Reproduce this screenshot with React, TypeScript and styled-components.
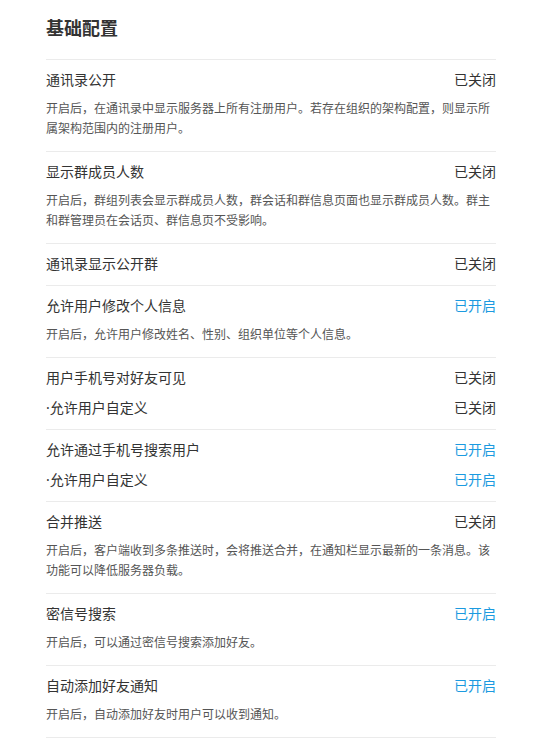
import React, { FC } from 'react';
import styled, { createGlobalStyle } from 'styled-components';

const GlobalStyle = createGlobalStyle`
  html, body {
    margin: 0;
    padding: 0;
    background: #fff;
  }
  body {
    font-family: "Noto Sans", "Noto Sans CJK SC", sans-serif;
    color: #333;
  }
`;

const Page = styled.div`
  width: 450px;
  padding: 0 50px 0 46px;
`;

const Heading = styled.h2`
  margin: 0;
  padding: 15px 0 18px;
  font-size: 18px;
  line-height: 26px;
  font-weight: 700;
  color: #333;
  border-bottom: 1px solid #ebebeb;
`;

const Section = styled.div`
  padding: 9px 0 10px;
  border-bottom: 1px solid #ebebeb;
`;

const Line = styled.div<{ $sub?: boolean }>`
  display: flex;
  align-items: center;
  justify-content: space-between;
  font-size: 14px;
  line-height: 22px;
  margin-top: ${p => (p.$sub ? '8px' : '0')};
`;

const Label = styled.span`
  color: #333;
`;

const Status = styled.span<{ $on: boolean }>`
  color: ${p => (p.$on ? '#1b9ae0' : '#333')};
`;

const Desc = styled.p`
  margin: 8px 0 2px;
  font-size: 12px;
  line-height: 20px;
  color: #555;
`;

type Item = {
  title: string;
  on: boolean;
  desc?: string;
  sub?: { title: string; on: boolean };
};

const items: Item[] = [
  {
    title: '通讯录公开',
    on: false,
    desc: '开启后，在通讯录中显示服务器上所有注册用户。若存在组织的架构配置，则显示所属架构范围内的注册用户。',
  },
  {
    title: '显示群成员人数',
    on: false,
    desc: '开启后，群组列表会显示群成员人数，群会话和群信息页面也显示群成员人数。群主和群管理员在会话页、群信息页不受影响。',
  },
  { title: '通讯录显示公开群', on: false },
  {
    title: '允许用户修改个人信息',
    on: true,
    desc: '开启后，允许用户修改姓名、性别、组织单位等个人信息。',
  },
  {
    title: '用户手机号对好友可见',
    on: false,
    sub: { title: '·允许用户自定义', on: false },
  },
  {
    title: '允许通过手机号搜索用户',
    on: true,
    sub: { title: '·允许用户自定义', on: true },
  },
  {
    title: '合并推送',
    on: false,
    desc: '开启后，客户端收到多条推送时，会将推送合并，在通知栏显示最新的一条消息。该功能可以降低服务器负载。',
  },
  {
    title: '密信号搜索',
    on: true,
    desc: '开启后，可以通过密信号搜索添加好友。',
  },
  {
    title: '自动添加好友通知',
    on: true,
    desc: '开启后，自动添加好友时用户可以收到通知。',
  },
];

const statusText = (on: boolean) => (on ? '已开启' : '已关闭');

const SettingRow: FC<{ item: Item }> = ({ item }) => (
  <Section>
    <Line>
      <Label>{item.title}</Label>
      <Status $on={item.on}>{statusText(item.on)}</Status>
    </Line>
    {item.desc ? <Desc>{item.desc}</Desc> : null}
    {item.sub ? (
      <Line $sub>
        <Label>{item.sub.title}</Label>
        <Status $on={item.sub.on}>{statusText(item.sub.on)}</Status>
      </Line>
    ) : null}
  </Section>
);

const App: FC = () => (
  <>
    <GlobalStyle />
    <Page>
      <Heading>基础配置</Heading>
      {items.map(item => (
        <SettingRow key={item.title} item={item} />
      ))}
    </Page>
  </>
);

export default App;
